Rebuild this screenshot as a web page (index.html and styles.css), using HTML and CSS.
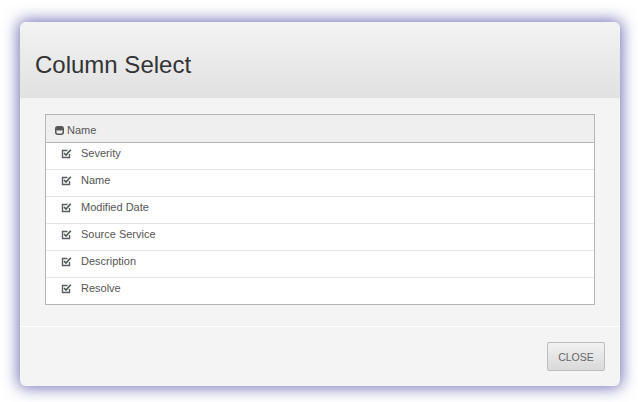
FILE: index.html
```html
<!DOCTYPE html>
<html>
<head>
<meta charset="utf-8">
<link rel="stylesheet" href="styles.css">
</head>
<body>
<div class="modal">
  <div class="modal-header"><h1 class="title">Column Select</h1></div>
  <div class="modal-body">
    <div class="grid">
      <div class="grid-head">
        <svg class="head-icon" width="9" height="9" viewBox="0 0 9 9"><rect x="0.75" y="0.75" width="7.5" height="7.5" rx="2" fill="none" stroke="#555" stroke-width="1.5"/><rect x="1" y="1" width="7" height="3.5" rx="1.5" fill="#555"/></svg>
        <span>Name</span>
      </div>
      <div class="row"><svg class="chk" width="11" height="11" viewBox="0 0 11 11"><path d="M8.5 6V9.5H1.5V2.5H6.5" fill="none" stroke="#5a5e63" stroke-width="1.4"/><path d="M3 5L5 7L9.8 1.8" fill="none" stroke="#4a5a50" stroke-width="1.6"/></svg><span>Severity</span></div>
      <div class="row"><svg class="chk" width="11" height="11" viewBox="0 0 11 11"><path d="M8.5 6V9.5H1.5V2.5H6.5" fill="none" stroke="#5a5e63" stroke-width="1.4"/><path d="M3 5L5 7L9.8 1.8" fill="none" stroke="#4a5a50" stroke-width="1.6"/></svg><span>Name</span></div>
      <div class="row"><svg class="chk" width="11" height="11" viewBox="0 0 11 11"><path d="M8.5 6V9.5H1.5V2.5H6.5" fill="none" stroke="#5a5e63" stroke-width="1.4"/><path d="M3 5L5 7L9.8 1.8" fill="none" stroke="#4a5a50" stroke-width="1.6"/></svg><span>Modified Date</span></div>
      <div class="row"><svg class="chk" width="11" height="11" viewBox="0 0 11 11"><path d="M8.5 6V9.5H1.5V2.5H6.5" fill="none" stroke="#5a5e63" stroke-width="1.4"/><path d="M3 5L5 7L9.8 1.8" fill="none" stroke="#4a5a50" stroke-width="1.6"/></svg><span>Source Service</span></div>
      <div class="row"><svg class="chk" width="11" height="11" viewBox="0 0 11 11"><path d="M8.5 6V9.5H1.5V2.5H6.5" fill="none" stroke="#5a5e63" stroke-width="1.4"/><path d="M3 5L5 7L9.8 1.8" fill="none" stroke="#4a5a50" stroke-width="1.6"/></svg><span>Description</span></div>
      <div class="row last"><svg class="chk" width="11" height="11" viewBox="0 0 11 11"><path d="M8.5 6V9.5H1.5V2.5H6.5" fill="none" stroke="#5a5e63" stroke-width="1.4"/><path d="M3 5L5 7L9.8 1.8" fill="none" stroke="#4a5a50" stroke-width="1.6"/></svg><span>Resolve</span></div>
    </div>
  </div>
  <div class="modal-footer"><button class="btn">CLOSE</button></div>
</div>
</body>
</html>
```
FILE: styles.css
```css
html, body { margin: 0; padding: 0; background: #fff; }
body {
  width: 638px; height: 402px;
  font-family: "Liberation Sans", Arial, sans-serif;
  padding: 22px 0 0 20px;
  box-sizing: border-box;
}
.modal {
  width: 600px; height: 364px;
  background: #f4f4f4;
  border-radius: 6px;
  box-shadow: 0 0 15px 2px rgba(70, 70, 160, 0.75);
  display: flex; flex-direction: column;
  overflow: hidden;
}
.modal-header {
  height: 76px;
  background: linear-gradient(#f3f3f3, #e1e1e1);
  display: flex; align-items: center;
  padding-left: 15px;
  flex: none;
}
.title {
  margin: 0; padding-top: 10px;
  font-weight: normal; font-size: 24px;
  color: #333;
}
.modal-body {
  padding: 16px 25px 21px 25px;
  flex: none;
}
.grid {
  width: 550px;
  box-sizing: border-box;
  border: 1px solid #b5b5b5;
  background: #fff;
}
.grid-head {
  height: 28px; box-sizing: border-box;
  background: #efefef;
  border-bottom: 1px solid #b5b5b5;
  display: flex; align-items: flex-start;
  padding: 9px 0 0 9px; gap: 3px;
  font-size: 11px; line-height: 13px; color: #555;
}
.head-icon { margin-top: 2px; }
.row {
  height: 27px; box-sizing: border-box;
  border-bottom: 1px solid #e3e3e3;
  display: flex; align-items: flex-start;
  padding: 4px 0 0 15px; gap: 9px;
  font-size: 11px; line-height: 13px; color: #555;
}
.row.last { border-bottom: none; height: 26px; }
.chk { margin-top: 1px; }
.modal-footer {
  flex: 1;
  border-top: 1px solid #fff;
  display: flex; justify-content: flex-end; align-items: flex-start;
  padding: 15px 15px 0 0;
}
.btn {
  width: 58px; height: 29px;
  border: 1px solid #bdbdbd;
  border-radius: 2px;
  background: linear-gradient(#f2f2f2, #d9d9d9);
  font-family: "Liberation Sans", Arial, sans-serif;
  font-size: 10.5px; color: #666;
  padding: 0;
}
```
